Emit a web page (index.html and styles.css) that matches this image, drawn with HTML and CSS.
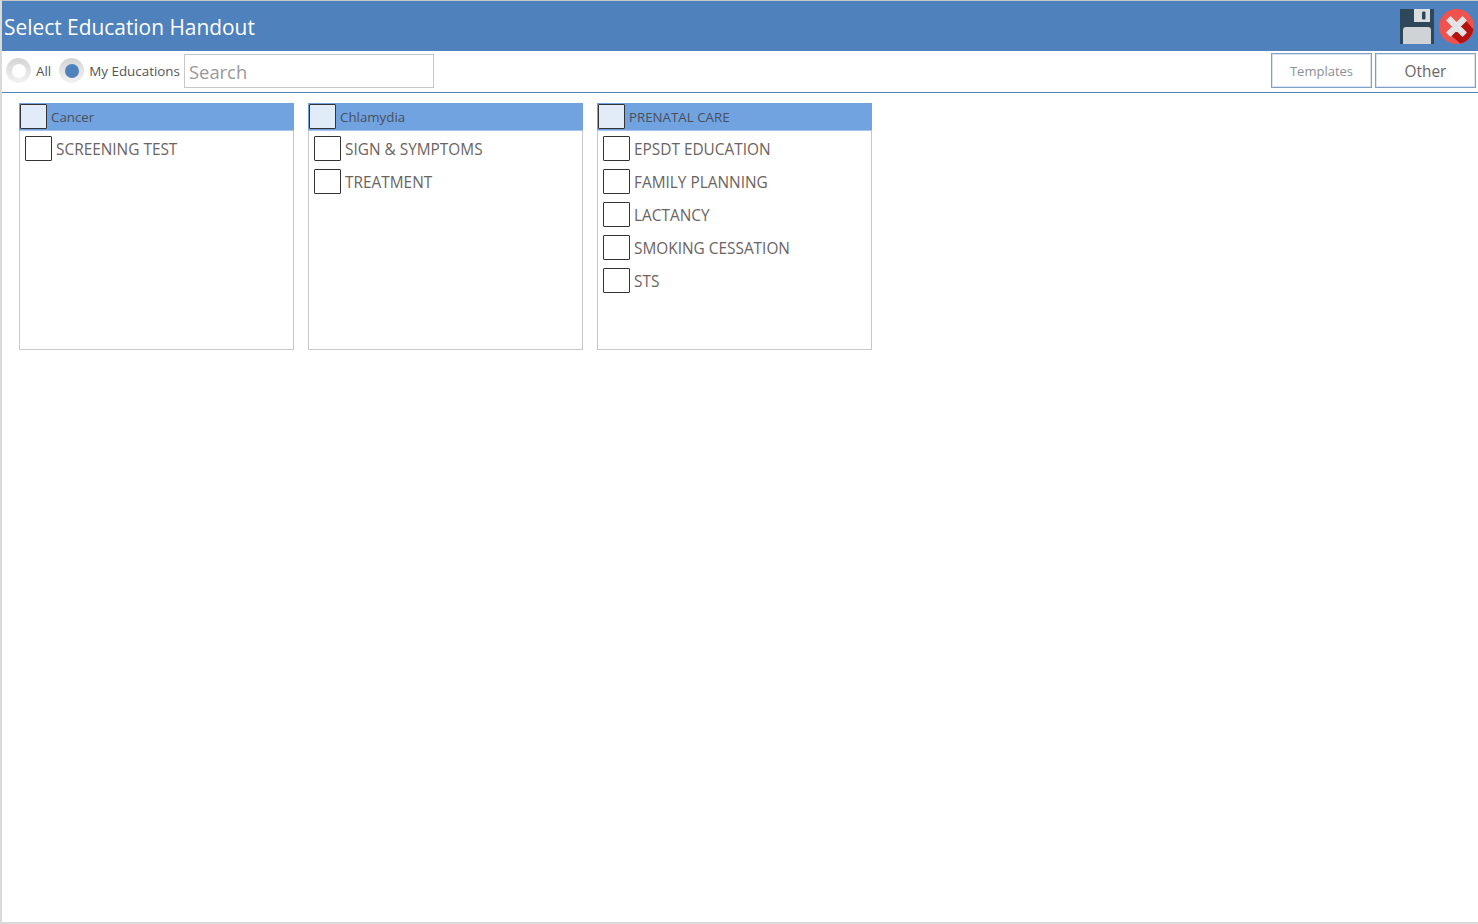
FILE: index.html
```html
<!DOCTYPE html>
<html lang="en">
<head>
<meta charset="utf-8">
<title>Select Education Handout</title>
<link rel="stylesheet" href="styles.css">
</head>
<body>
<div class="window">
  <header class="titlebar">
    <h1 class="title">Select Education Handout</h1>
    <div class="title-actions">
      <svg class="icon-save" width="34" height="35" viewBox="0 0 34 35">
        <rect width="34" height="35" fill="#2f4859"/>
        <rect x="14" y="0" width="16" height="13" fill="#dadee1"/>
        <rect x="22" y="2.500" width="3.500" height="8" rx="1" fill="#2f4859"/>
        <path d="M3 35V21a3 3 0 0 1 3-3h22a3 3 0 0 1 3 3v14z" fill="#cfd3d6"/>
      </svg>
      <svg class="icon-close" width="35" height="35" viewBox="0 0 35 35">
        <circle cx="17.500" cy="17.500" r="17.500" fill="#f0524d"/>
        <path d="M25 9.500l9.500 11a17.500 17.500 0 0 1-13 14L10 25z" fill="#b4120e"/>
        <path d="M11.500 8L17.500 14l6-6 3.500 3.500-6 6 6 6-3.500 3.500-6-6-6 6L8 23.500l6-6-6-6z" fill="#e3e3e3" stroke="#e3e3e3" stroke-width="1.500" stroke-linejoin="round"/>
      </svg>
    </div>
  </header>

  <div class="toolbar">
    <div class="filters">
      <span class="radio"><span class="radio-hole"></span></span>
      <span class="radio-label">All</span>
      <span class="radio radio-second"><span class="radio-hole radio-on"></span></span>
      <span class="radio-label">My Educations</span>
      <div class="search">Search</div>
    </div>
    <div class="tabs">
      <button class="tab tab-small">Templates</button>
      <button class="tab">Other</button>
    </div>
  </div>

  <main class="groups">
    <section class="group">
      <div class="group-head"><span class="box box-head"></span><span class="group-name">Cancer</span></div>
      <ul class="items">
        <li class="item"><span class="box"></span><span>SCREENING TEST</span></li>
      </ul>
    </section>
    <section class="group">
      <div class="group-head"><span class="box box-head"></span><span class="group-name">Chlamydia</span></div>
      <ul class="items">
        <li class="item"><span class="box"></span><span>SIGN &amp; SYMPTOMS</span></li>
        <li class="item"><span class="box"></span><span>TREATMENT</span></li>
      </ul>
    </section>
    <section class="group">
      <div class="group-head"><span class="box box-head"></span><span class="group-name">PRENATAL CARE</span></div>
      <ul class="items">
        <li class="item"><span class="box"></span><span>EPSDT EDUCATION</span></li>
        <li class="item"><span class="box"></span><span>FAMILY PLANNING</span></li>
        <li class="item"><span class="box"></span><span>LACTANCY</span></li>
        <li class="item"><span class="box"></span><span>SMOKING CESSATION</span></li>
        <li class="item"><span class="box"></span><span>STS</span></li>
      </ul>
    </section>
  </main>
</div>
</body>
</html>
```
FILE: styles.css
```css
* { box-sizing: border-box; }
html, body { margin: 0; height: 100%; background: #fff; overflow: hidden; }
body { font-family: "Open Sans", "Noto Sans", "Liberation Sans", sans-serif; color: #6b6460; }
.window {
  height: 924px;
  border-top: 1px solid #c8c8c8;
  border-left: 2px solid #dadada;
  border-bottom: 2px solid #dadada;
  display: flex;
  flex-direction: column;
}
.titlebar {
  height: 50px;
  background: #4f81bd;
  display: flex;
  align-items: center;
  justify-content: space-between;
  padding: 0 4px 0 2px;
  flex: none;
}
.title { margin: 2px 0 0; font-size: 20.900px; font-weight: 400; color: #fff; }
.title-actions { display: flex; gap: 5px; align-items: center; }
.icon-save, .icon-close { display: block; }
.toolbar {
  height: 42px;
  border-bottom: 1px solid #4f81bd;
  display: flex;
  justify-content: space-between;
  align-items: center;
  flex: none;
  padding: 0 2px 2px 4px;
}
.filters { display: flex; align-items: center; }
.radio {
  width: 25px;
  height: 25px;
  border-radius: 50%;
  background: linear-gradient(#d4d4d4, #f2f2f2);
  display: flex;
  align-items: center;
  justify-content: center;
}
.radio-second { margin-left: 8px; }
.radio-hole { width: 14px; height: 14px; border-radius: 50%; background: #fff; }
.radio-on { background: #4f81bd; }
.radio-label { font-size: 13.400px; color: #555; margin-left: 5px; }
.search {
  width: 250px;
  height: 34px;
  margin-left: 4px;
  border: 1px solid #c8c8c8;
  padding-left: 4px;
  font-size: 18.400px;
  line-height: 34px;
  color: #999;
}
.tabs { display: flex; gap: 3px; }
.tab {
  width: 101px;
  height: 35px;
  background: #fff;
  border: 1px solid #7f9fc9;
  box-shadow: inset 0 0 0 1px #dbe5f2;
  font-family: inherit;
  font-size: 15.400px;
  color: #6b6460;
  padding: 2px 0 0;
}
.tab-small { font-size: 13px; color: #8a8f99; padding: 0; }
.groups { display: flex; gap: 14px; padding: 10px 0 0 17px; }
.group {
  width: 275px;
  height: 247px;
  border: 1px solid #c8c8c8;
  border-top: 0;
}
.group-head {
  height: 28px;
  margin: 0 -1px;
  background: #70a3e0;
  display: flex;
  align-items: center;
  padding-left: 1px;
  border-bottom: 1px solid #a9c4e6;
}
.box {
  width: 27px;
  height: 25px;
  border: 1px solid #333;
  background: #fff;
  flex: none;
  border-radius: 1px;
}
.box-head { background: #e2ecf8; }
.group-name { font-size: 13.300px; color: #4a4f5a; margin-left: 4px; }
.items { list-style: none; margin: 0; padding: 5px 0 0 5px; }
.item {
  height: 33px;
  display: flex;
  align-items: flex-start;
  gap: 4px;
  font-size: 15.400px;
  line-height: 27px;
}
```
